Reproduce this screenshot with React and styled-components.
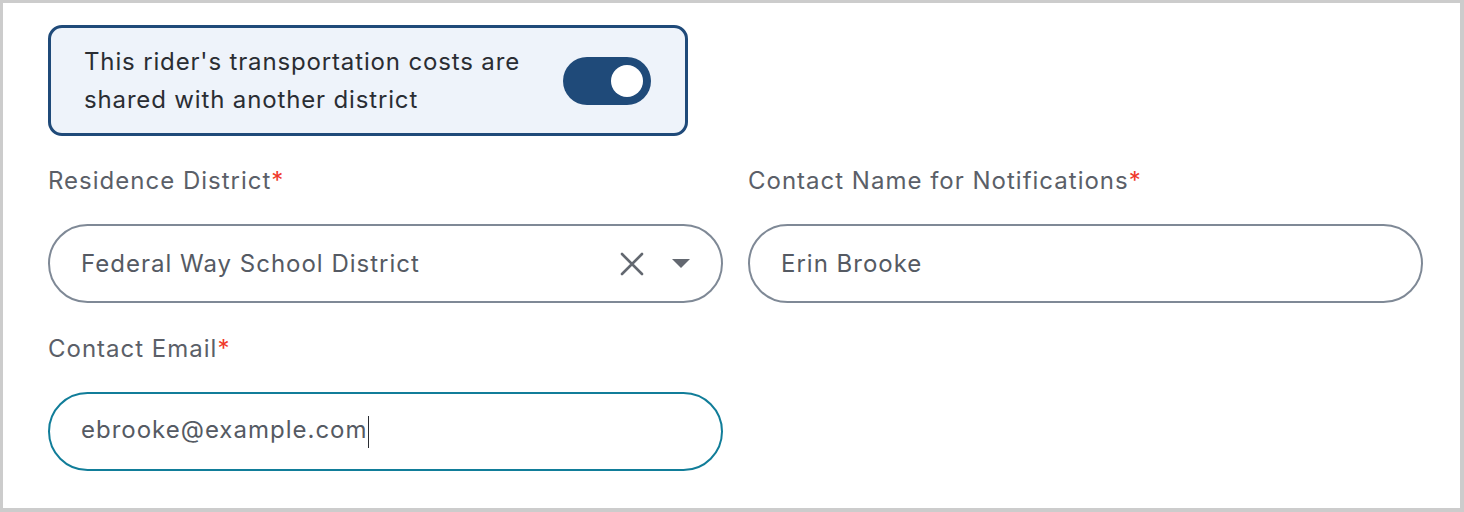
import React, { useState } from 'react';
import styled, { createGlobalStyle } from 'styled-components';

const GlobalStyle = createGlobalStyle`
  html, body {
    margin: 0;
    padding: 0;
    background: #cccccc;
  }
  body {
    font-family: Inter, "Noto Sans", sans-serif;
  }
`;

const Frame = styled.div`
  box-sizing: border-box;
  width: 1464px;
  height: 512px;
  padding: 3px 4px 4px 3px;
  background: #cccccc;
`;

const Card = styled.div`
  box-sizing: border-box;
  height: 100%;
  background: #ffffff;
  padding: 22px 0 0 45px;
`;

const ShareBox = styled.div`
  box-sizing: border-box;
  width: 640px;
  height: 111px;
  display: flex;
  align-items: center;
  justify-content: space-between;
  padding: 0 34px 0 33px;
  background: #eef3fa;
  border: 3px solid #1f4a79;
  border-radius: 14px;
`;

const ShareText = styled.div`
  font-size: 24px;
  line-height: 38px;
  letter-spacing: 0.85px;
  color: #2a2d33;
  width: 460px;
`;

const Toggle = styled.button`
  box-sizing: border-box;
  width: 88px;
  height: 48px;
  border: none;
  border-radius: 24px;
  padding: 0 8px;
  display: flex;
  align-items: center;
  justify-content: ${p => (p.$on ? 'flex-end' : 'flex-start')};
  background: ${p => (p.$on ? '#1f4a79' : '#9aa3ae')};
  cursor: pointer;
`;

const Knob = styled.span`
  width: 32px;
  height: 32px;
  border-radius: 50%;
  background: #ffffff;
`;

const Grid = styled.div`
  display: grid;
  grid-template-columns: 675px 675px;
  column-gap: 25px;
  margin-top: 31px;
`;

const Field = styled.div`
  display: flex;
  flex-direction: column;
  margin-bottom: ${p => (p.$last ? '0' : '32px')};
`;

const Label = styled.label`
  font-size: 24px;
  line-height: 26px;
  letter-spacing: 1px;
  color: #5b5f68;
  margin: 1px 0 30px;
`;

const Required = styled.span`
  color: #f0392b;
`;

const InputShell = styled.div`
  box-sizing: border-box;
  height: 79px;
  display: flex;
  align-items: center;
  padding: 0 30px 0 31px;
  border: 2px solid ${p => (p.$focused ? '#117d99' : '#7f8996')};
  border-radius: 40px;
  background: #ffffff;
`;

const Value = styled.span`
  flex: 1;
  font-size: 24px;
  letter-spacing: 1px;
  color: #555a63;
  white-space: nowrap;
`;

const Caret = styled.span`
  display: inline-block;
  width: 1.5px;
  height: 32px;
  background: #2a2d33;
  vertical-align: middle;
`;

const IconButton = styled.span`
  display: flex;
  align-items: center;
  justify-content: center;
  margin-left: ${p => p.$gap || '0'};
`;

const ClearIcon = () => (
  <svg width="24" height="24" viewBox="0 0 24 24">
    <path d="M2 2 L22 22 M22 2 L2 22" stroke="#636870" strokeWidth="2.6" strokeLinecap="round" />
  </svg>
);

const CaretDown = () => (
  <svg width="20" height="12" viewBox="0 0 20 12">
    <path d="M1 1 H19 L10 10 Z" fill="#636870" />
  </svg>
);

const App = () => {
  const [shared, setShared] = useState(true);

  return (
    <Frame>
      <GlobalStyle />
      <Card>
        <ShareBox>
          <ShareText>This rider's transportation costs are shared with another district</ShareText>
          <Toggle $on={shared} onClick={() => setShared(!shared)}>
            <Knob />
          </Toggle>
        </ShareBox>

        <Grid>
          <Field>
            <Label>Residence District<Required>*</Required></Label>
            <InputShell>
              <Value>Federal Way School District</Value>
              <IconButton><ClearIcon /></IconButton>
              <IconButton $gap="27px"><CaretDown /></IconButton>
            </InputShell>
          </Field>
          <Field>
            <Label>Contact Name for Notifications<Required>*</Required></Label>
            <InputShell>
              <Value>Erin Brooke</Value>
            </InputShell>
          </Field>
          <Field $last>
            <Label>Contact Email<Required>*</Required></Label>
            <InputShell $focused>
              <Value>ebrooke@example.com<Caret /></Value>
            </InputShell>
          </Field>
        </Grid>
      </Card>
    </Frame>
  );
};

export default App;
